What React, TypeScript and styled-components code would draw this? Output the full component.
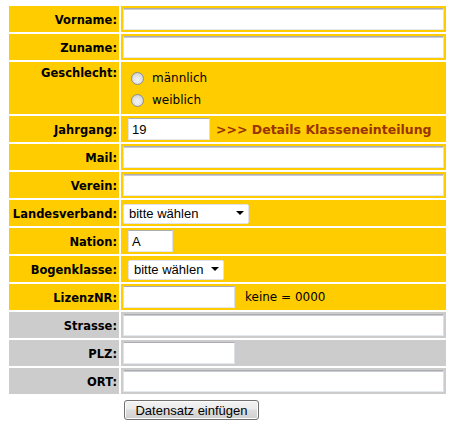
import React from "react";
import styled, { createGlobalStyle } from "styled-components";

const Global = createGlobalStyle`
  html, body { margin: 0; padding: 0; background: #ffffff; }
  body { font-family: "DejaVu Sans", Verdana, sans-serif; }
`;

type Tone = "yellow" | "gray";

const Page = styled.form`
  padding: 6px 0 0 9px;
  width: 452px;
  box-sizing: border-box;
`;

const Grid = styled.div`
  display: grid;
  grid-template-columns: 110px 325px;
  grid-auto-rows: auto;
  gap: 2px;
`;

const Label = styled.div<{ $tone: Tone; $top?: boolean; $tall?: boolean }>`
  background: ${(p) => (p.$tone === "yellow" ? "#ffcc00" : "#cccccc")};
  height: ${(p) => (p.$tall ? "52px" : "26px")};
  display: flex;
  justify-content: flex-end;
  align-items: ${(p) => (p.$top ? "flex-start" : "center")};
  padding: ${(p) => (p.$top ? "4px 2px 0 0" : "2px 2px 0 0")};
  box-sizing: border-box;
  font-family: "DejaVu Sans", Verdana, sans-serif;
  font-weight: bold;
  font-size: 11.5px;
  color: #000;
  white-space: nowrap;
`;

const Field = styled.div<{ $tone: Tone; $tall?: boolean }>`
  background: ${(p) => (p.$tone === "yellow" ? "#ffcc00" : "#cccccc")};
  height: ${(p) => (p.$tall ? "52px" : "26px")};
  display: flex;
  align-items: center;
  padding: 0 2px;
  box-sizing: border-box;
`;

const TextInput = styled.input<{ $w?: number; $indent?: boolean }>`
  box-sizing: border-box;
  height: 22px;
  width: ${(p) => (p.$w ? `${p.$w}px` : "100%")};
  margin: 0 0 0 ${(p) => (p.$indent ? "5px" : "0")};
  padding: 0 3px;
  background: #ffffff;
  border: 1px solid;
  border-color: #abadb3 #dbdfe6 #e3e9ef #e2e3ea;
  box-shadow: ${(p) => (p.$w ? "none" : "inset 0 1px 0 #c9ccd2")};
  font-family: "Liberation Sans", Arial, sans-serif;
  font-size: 13px;
  color: #000;
  outline: none;
`;

const RadioGroup = styled.div`
  align-self: flex-start;
  display: flex;
  flex-direction: column;
  padding: 5px 0 0 5px;
`;

const RadioLine = styled.label`
  display: flex;
  align-items: center;
  height: 22px;
  font-family: "DejaVu Sans", Verdana, sans-serif;
  font-size: 12px;
  color: #000;
`;

const Radio = styled.input`
  appearance: none;
  width: 13px;
  height: 13px;
  margin: 0 8px 0 3px;
  border-radius: 50%;
  border: 1px solid #8e8f8f;
  box-sizing: border-box;
  background: radial-gradient(circle at 50% 60%, #f4f4f4 0%, #e4e4e4 45%, #c4c4c4 100%);
`;

const SelectWrap = styled.span<{ $w: number; $indent?: boolean }>`
  position: relative;
  display: inline-block;
  width: ${(p) => p.$w}px;
  height: 20px;
  margin-left: ${(p) => (p.$indent ? "5px" : "0")};
  &::after {
    content: "";
    position: absolute;
    right: 5px;
    top: 8px;
    border-left: 4px solid transparent;
    border-right: 4px solid transparent;
    border-top: 4px solid #000;
    pointer-events: none;
  }
`;

const Select = styled.select`
  appearance: none;
  box-sizing: border-box;
  width: 100%;
  height: 20px;
  padding: 0 0 0 5px;
  background: #ffffff;
  border: 1px solid #e2e3ea;
  border-radius: 2px;
  font-family: "Liberation Sans", Arial, sans-serif;
  font-size: 13px;
  color: #000;
  outline: none;
`;

const DetailsLink = styled.a`
  margin-left: 6px;
  font-family: "DejaVu Sans", Verdana, sans-serif;
  font-weight: bold;
  font-size: 12.5px;
  color: #993300;
  text-decoration: none;
  white-space: nowrap;
`;

const Hint = styled.span`
  margin-left: 10px;
  font-family: "DejaVu Sans", Verdana, sans-serif;
  font-size: 12px;
  color: #000;
  white-space: pre;
`;

const SubmitButton = styled.button`
  display: block;
  margin: 6px 0 0 115px;
  width: 135px;
  height: 20px;
  padding: 0;
  box-sizing: border-box;
  border: 1px solid #707070;
  border-radius: 3px;
  background: linear-gradient(#f2f2f2 0%, #ebebeb 45%, #dddddd 50%, #cfcfcf 100%);
  box-shadow: inset 0 0 0 1px #fcfcfc;
  font-family: "Liberation Sans", Arial, sans-serif;
  font-size: 13px;
  color: #000;
`;

export default function App() {
  return (
    <>
      <Global />
      <Page onSubmit={(e) => e.preventDefault()}>
        <Grid>
          <Label $tone="yellow">Vorname:</Label>
          <Field $tone="yellow"><TextInput type="text" /></Field>

          <Label $tone="yellow">Zuname:</Label>
          <Field $tone="yellow"><TextInput type="text" /></Field>

          <Label $tone="yellow" $top $tall>Geschlecht:</Label>
          <Field $tone="yellow" $tall>
            <RadioGroup>
              <RadioLine><Radio type="radio" name="g" />männlich</RadioLine>
              <RadioLine><Radio type="radio" name="g" />weiblich</RadioLine>
            </RadioGroup>
          </Field>

          <Label $tone="yellow">Jahrgang:</Label>
          <Field $tone="yellow">
            <TextInput type="text" $w={82} $indent defaultValue="19" />
            <DetailsLink href="#">&gt;&gt;&gt; Details Klasseneinteilung</DetailsLink>
          </Field>

          <Label $tone="yellow">Mail:</Label>
          <Field $tone="yellow"><TextInput type="text" /></Field>

          <Label $tone="yellow">Verein:</Label>
          <Field $tone="yellow"><TextInput type="text" /></Field>

          <Label $tone="yellow">Landesverband:</Label>
          <Field $tone="yellow">
            <SelectWrap $w={126}>
              <Select defaultValue="0"><option value="0">bitte wählen</option></Select>
            </SelectWrap>
          </Field>

          <Label $tone="yellow">Nation:</Label>
          <Field $tone="yellow">
            <TextInput type="text" $w={45} $indent defaultValue="A" />
          </Field>

          <Label $tone="yellow">Bogenklasse:</Label>
          <Field $tone="yellow">
            <SelectWrap $w={96} $indent>
              <Select defaultValue="0"><option value="0">bitte wählen</option></Select>
            </SelectWrap>
          </Field>

          <Label $tone="yellow">LizenzNR:</Label>
          <Field $tone="yellow">
            <TextInput type="text" $w={112} />
            <Hint>keine = 0000</Hint>
          </Field>

          <Label $tone="gray">Strasse:</Label>
          <Field $tone="gray"><TextInput type="text" /></Field>

          <Label $tone="gray">PLZ:</Label>
          <Field $tone="gray"><TextInput type="text" $w={112} /></Field>

          <Label $tone="gray">ORT:</Label>
          <Field $tone="gray"><TextInput type="text" /></Field>
        </Grid>
        <SubmitButton type="submit">Datensatz einfügen</SubmitButton>
      </Page>
    </>
  );
}
